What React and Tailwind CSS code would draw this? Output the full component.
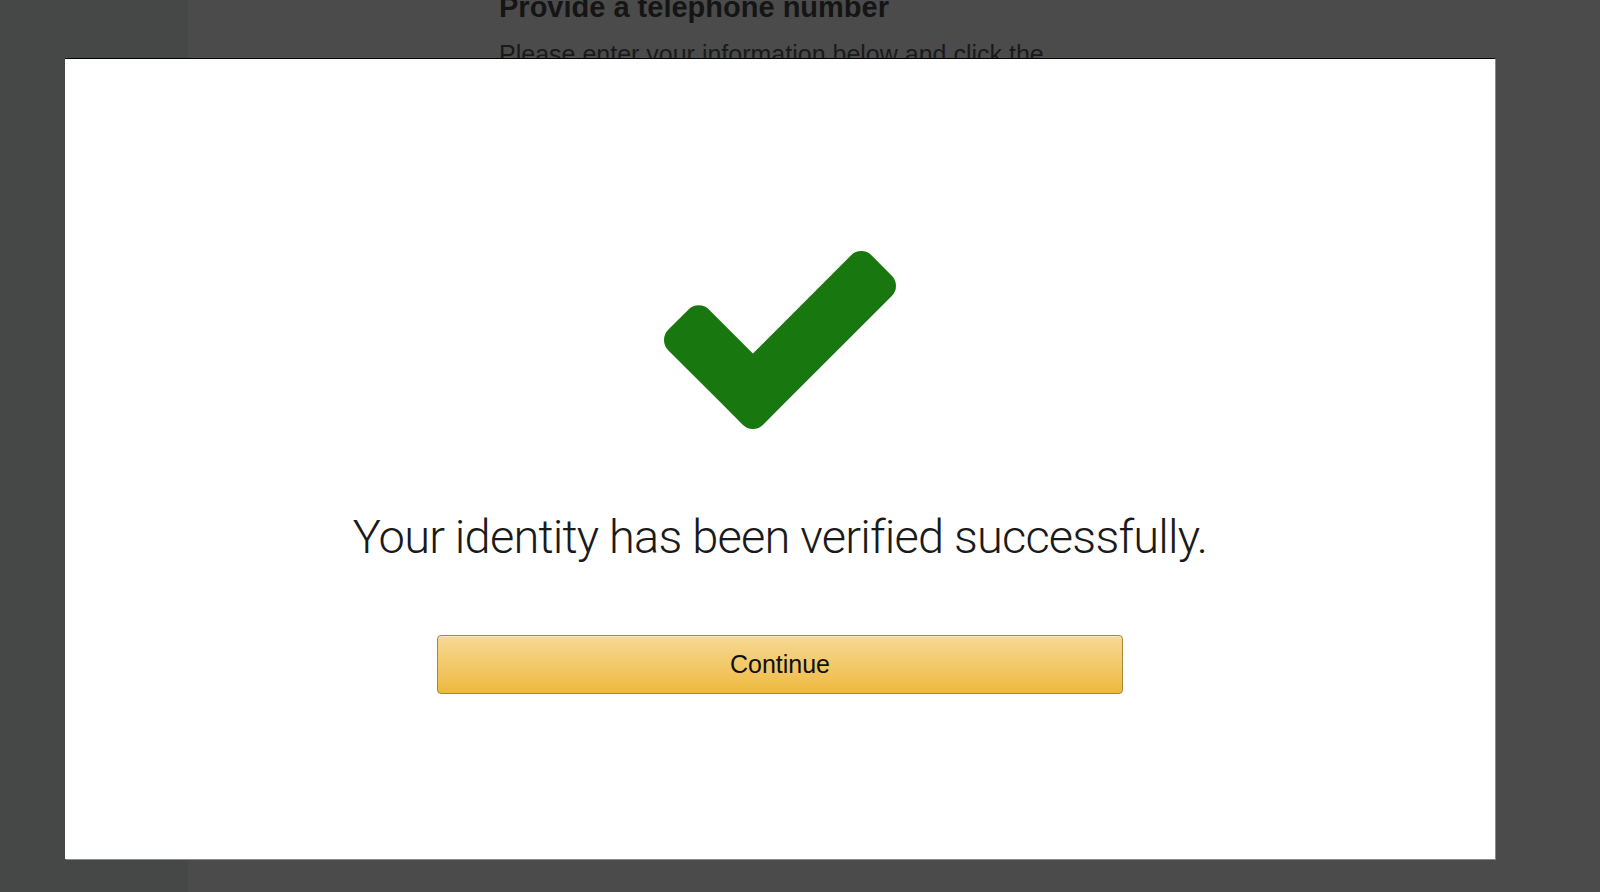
import React from 'react';

const CheckMark = () => (
  <svg width="232" height="178" viewBox="121 334 1550 1188" aria-hidden="true">
    <path
      fill="#18780f"
      d="M1671 566q0 40-28 68l-724 724-136 136q-28 28-68 28t-68-28l-136-136-362-362q-28-28-28-68t28-68l136-136q28-28 68-28t68 28l294 295 656-657q28-28 68-28t68 28l136 136q28 28 28 68z"
    />
  </svg>
);

const App = () => {
  return (
    <div className="relative h-[892px] w-[1600px] overflow-hidden flex font-['Liberation_Sans',Arial,sans-serif]">
      {/* page behind the overlay */}
      <div className="w-[188px] bg-[#464847]" />
      <div className="flex-1 bg-[#4b4b4b] pl-[311px]">
        <h1 className="mt-[-7px] text-[29px] leading-none font-bold text-[#151515] whitespace-nowrap">Provide a telephone number</h1>
        <p className="mt-[20px] text-[25px] leading-none text-[#1a1a1a] whitespace-nowrap">
          Please enter your information below and click the
        </p>
      </div>

      {/* verification modal */}
      <div className="absolute left-[65px] top-[58px] w-[1430px] h-[801px] bg-white border-t border-black shadow-[1px_1px_0_#8a8a8a] flex flex-col items-center pt-[192px]">
        <CheckMark />
        <p className="mt-[84px] text-[47px] leading-none font-light tracking-[-0.8px] text-[#1a1a1a] font-['Roboto',sans-serif]">
          Your identity has been verified successfully.
        </p>
        <button className="mt-[75px] w-[686px] h-[59px] rounded-[4px] border border-[#a88734] bg-gradient-to-b from-[#f6d993] to-[#eeb938] shadow-[inset_0_1px_0_rgba(255,255,255,0.5)] text-[25px] text-[#111]">
          Continue
        </button>
      </div>
    </div>
  );
};

export default App;
